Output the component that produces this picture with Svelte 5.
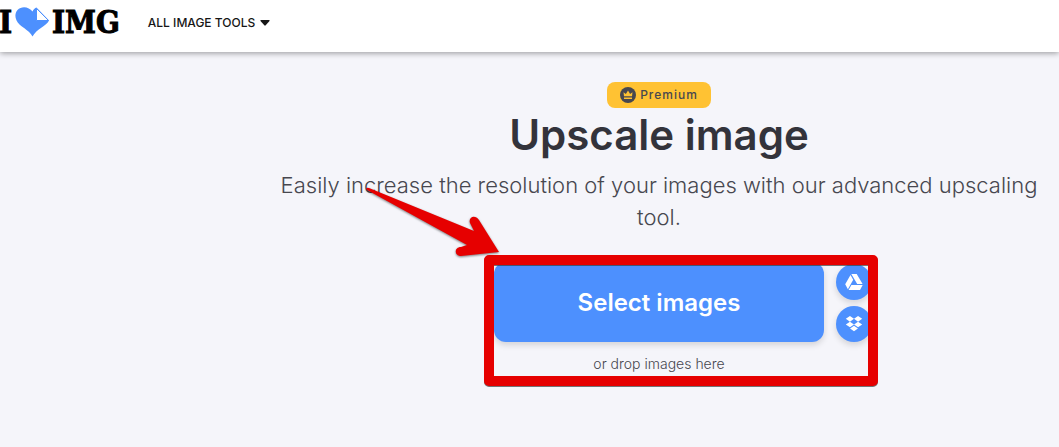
<script lang="ts">
  const title = 'Upscale image';
  const subtitle = 'Easily increase the resolution of your images with our advanced upscaling tool.';
</script>

<header class="header">
  <a class="brand" href="/" aria-label="I love IMG">
    <span>I</span>
    <svg class="brand-heart" viewBox="0 0 34 30" aria-hidden="true">
      <path d="M17.500 29.500C14.500 24 9 21.500 4.500 17.500C0 13.500-1 7 2.500 3C6.500-1.500 14-.5 17.500 4.500C18.500 2.500 19.800 1.300 21.500.6L34 13.500C31.500 19 21.500 22 17.500 29.500Z" fill="#4d90fe" />
      <path d="M21.500 1.500L33.500 13.500H21.500Z" fill="#fff" stroke="#4d90fe" stroke-width="1" />
    </svg>
    <span>IMG</span>
  </a>
  <nav>
    <a class="nav-link" href="/tools">
      ALL IMAGE TOOLS
      <svg class="caret" viewBox="0 0 10 6" aria-hidden="true"><path d="M1 0H9Q10 0 9.500 1L5.700 5.300Q5 6 4.300 5.300L.5 1Q0 0 1 0Z" fill="currentColor" /></svg>
    </a>
  </nav>
</header>

<main class="tool">
  <span class="badge">
    <svg class="badge-icon" viewBox="0 0 16 16" aria-hidden="true">
      <circle cx="8" cy="8" r="8" fill="#47474f" />
      <path d="M4 9.300L3.500 5.300L5.900 7L8 3.600L10.100 7L12.500 5.300L12 9.300ZM4 10.600H12V12H4Z" fill="#ffc233" />
    </svg>
    Premium
  </span>
  <h1 class="title">{title}</h1>
  <h2 class="subtitle">{subtitle}</h2>

  <div class="uploader">
    <button class="select-button" type="button">Select images</button>
    <div class="sources">
      <button class="source" type="button" aria-label="Select images from Google Drive">
        <svg viewBox="0 0 18 16" aria-hidden="true">
          <path d="M6.300 0H11.700L17.600 10H12.200ZM5.500 1L8.200 5.700L2.900 15.200L.2 10.300ZM6.400 10.900H17.700L15 16H3.600Z" fill="#fff" />
        </svg>
      </button>
      <button class="source" type="button" aria-label="Select images from Dropbox">
        <svg viewBox="0 0 18 17" aria-hidden="true">
          <path d="M4.700 0L9 3L4.700 6L.3 3ZM13.300 0L17.700 3L13.300 6L9 3ZM4.700 6L9 9L4.700 12L.3 9ZM13.300 6L17.700 9L13.300 12L9 9ZM9 10.300L13.200 13.200L9 16.300L4.800 13.200Z" fill="#fff" />
        </svg>
      </button>
    </div>
    <div class="frame"></div>
    <svg class="arrow" viewBox="0 0 140 74" aria-hidden="true">
      <path d="M3 6Q1 3 5 4L110 47L106 39C104 33 111 30 115 36L135 68L97 72C90 72 90 63 97 63L103 61Z" fill="#e60000" />
    </svg>
  </div>
  <p class="hint">or drop images here</p>
</main>

<style>
  :global(body) {
    margin: 0;
    background: #f5f5fa;
    color: #33333b;
    font-family: Inter, "Liberation Sans", sans-serif;
  }
  .header {
    display: flex;
    align-items: center;
    gap: 28px;
    height: 52px;
    box-sizing: border-box;
    padding-bottom: 8px;
    background: #fff;
    box-shadow: 0 1px 6px rgb(0 0 0 / 40%);
  }
  .brand {
    display: flex;
    align-items: center;
    gap: 3px;
    margin-left: -1px;
    color: #000;
    font: bold 31px/40px "DejaVu Serif Condensed", "DejaVu Serif", serif;
    text-decoration: none;
    -webkit-text-stroke: 1px #000;
  }
  .brand-heart {
    width: 34px;
    height: 30px;
  }
  .nav-link {
    display: flex;
    align-items: center;
    gap: 5px;
    padding-top: 2px;
    color: #161616;
    font-size: 12px;
    font-weight: 500;
    line-height: 20px;
    text-decoration: none;
  }
  .caret {
    width: 10px;
    height: 6px;
  }
  .tool {
    display: flex;
    flex-direction: column;
    align-items: center;
    padding: 30px 0 40px 259px;
    text-align: center;
  }
  .badge {
    display: flex;
    align-items: center;
    gap: 4px;
    padding: 0 13px;
    border-radius: 8px;
    background: #ffc233;
    color: #47474f;
    font-size: 12px;
    font-weight: 500;
    line-height: 26px;
    letter-spacing: 1px;
  }
  .badge-icon {
    width: 16px;
    height: 16px;
  }
  .title {
    margin: 0;
    font-size: 42px;
    font-weight: 600;
    line-height: 54px;
  }
  .subtitle {
    max-width: 780px;
    margin: 7px 0 0;
    color: #47474f;
    font-size: 22px;
    font-weight: 300;
    line-height: 32px;
  }
  .uploader {
    position: relative;
    margin-top: 29px;
  }
  .select-button {
    display: block;
    width: 330px;
    height: 80px;
    padding: 2px 0 0;
    border: 0;
    border-radius: 12px;
    background: #4d90fe;
    box-shadow: 0 3px 6px rgb(0 0 0 / 14%);
    color: #fff;
    font: 600 24px/28px Inter, sans-serif;
  }
  .sources {
    position: absolute;
    bottom: 0;
    left: 342px;
    display: grid;
    gap: 6px;
  }
  .source {
    display: grid;
    place-items: center;
    width: 36px;
    height: 36px;
    padding: 0;
    border: 0;
    border-radius: 50%;
    background: #4d90fe;
    box-shadow: 0 3px 6px rgb(0 0 0 / 14%);
  }
  .source svg {
    width: 18px;
    height: 16px;
  }
  .frame {
    position: absolute;
    top: -7px;
    left: -10px;
    width: 374px;
    height: 111px;
    border: 10px solid #e60000;
    border-radius: 5px;
    filter: drop-shadow(0 1px 0 rgb(60 60 60 / 70%));
    pointer-events: none;
  }
  .arrow {
    position: absolute;
    top: -78px;
    left: -130px;
    width: 140px;
    height: 74px;
    filter: drop-shadow(0 1px 1px rgb(0 0 0 / 50%));
    pointer-events: none;
  }
  .hint {
    margin: 12px 0 0;
    color: #47474f;
    font-size: 14px;
    font-weight: 300;
    line-height: 20px;
  }
</style>
